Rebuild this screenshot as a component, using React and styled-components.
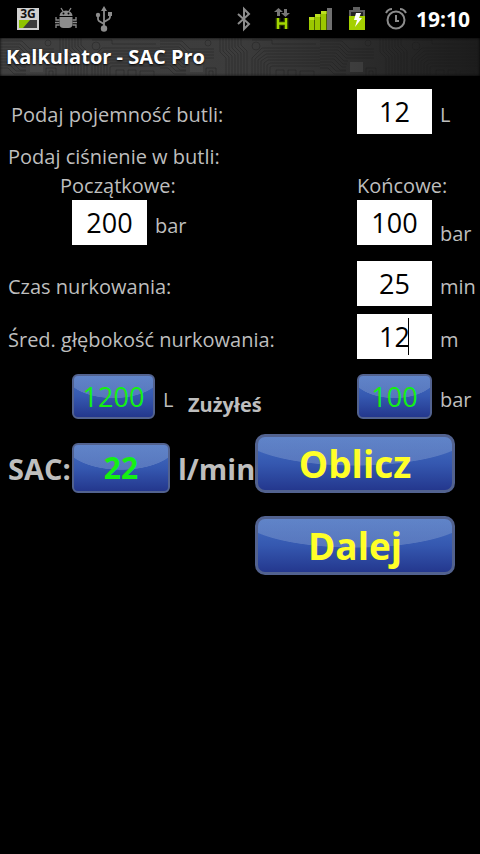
import React, { useState } from 'react'
import styled, { createGlobalStyle, css } from 'styled-components'

const App = () => {
  const [volume, setVolume] = useState('12')
  const [start, setStart] = useState('200')
  const [end, setEnd] = useState('100')
  const [time, setTime] = useState('25')
  const [depth, setDepth] = useState('12')
  const [result, setResult] = useState({ litres: 1200, bar: 100, sac: 22 })

  const calculate = () => {
    const bar = start - end
    const litres = bar * volume
    const sac = Math.round(litres / time / (depth / 10 + 1))
    setResult({ litres, bar, sac })
  }

  return (
    <Page>
      <GlobalStyle />
      <StatusBar>
        <IconGroup>
          <NetworkIcon />
          <DroidIcon />
          <UsbIcon />
        </IconGroup>
        <IconGroup>
          <BluetoothIcon />
          <DataIcon />
          <SignalIcon />
          <BatteryIcon />
          <AlarmIcon />
          <Clock>19:10</Clock>
        </IconGroup>
      </StatusBar>
      <TitleBar>
        <Circuit />
        <Title>Kalkulator - SAC Pro</Title>
      </TitleBar>

      <Form onSubmit={e => e.preventDefault()}>
        <Row>
          <Label htmlFor="volume" $inset>
            Podaj pojemność butli:
          </Label>
          <Field id="volume" value={volume} onChange={e => setVolume(e.target.value)} />
          <Unit>L</Unit>
        </Row>

        <Pressure>
          <Legend>Podaj ciśnienie w butli:</Legend>
          <Row>
            <StartLabel htmlFor="start">Początkowe:</StartLabel>
            <EndLabel htmlFor="end">Końcowe:</EndLabel>
          </Row>
          <Row>
            <LeftCell>
              <Field id="start" value={start} onChange={e => setStart(e.target.value)} />
              <Unit>bar</Unit>
            </LeftCell>
            <Field id="end" value={end} onChange={e => setEnd(e.target.value)} />
            <Unit $low>bar</Unit>
          </Row>
        </Pressure>

        <Row $space={16}>
          <Label htmlFor="time">Czas nurkowania:</Label>
          <Field id="time" value={time} onChange={e => setTime(e.target.value)} />
          <Unit>min</Unit>
        </Row>
        <Row $space={8}>
          <Label htmlFor="depth">Śred. głębokość nurkowania:</Label>
          <Active>
            <Field id="depth" value={depth} onChange={e => setDepth(e.target.value)} />
            <Caret />
          </Active>
          <Unit>m</Unit>
        </Row>

        <Row $space={15}>
          <LeftCell>
            <Result $width={83} aria-label="Zużyte litry">
              {result.litres}
            </Result>
            <Unit $narrow>L</Unit>
            <Used>Zużyłeś</Used>
          </LeftCell>
          <Result $width={75} aria-label="Zużyte bary">
            {result.bar}
          </Result>
          <Unit>bar</Unit>
        </Row>

        <Row $space={15}>
          <Sac>
            <SacText as="label" htmlFor="sac" $width={64}>
              SAC:
            </SacText>
            <Result id="sac" $width={98} $big>
              {result.sac}
            </Result>
            <SacText $gap>l/min</SacText>
          </Sac>
          <Button type="button" onClick={calculate}>
            Oblicz
          </Button>
        </Row>
        <Row $space={23} $end>
          <Button type="button">Dalej</Button>
        </Row>
      </Form>
    </Page>
  )
}

export default App

const NetworkIcon = () => (
  <Icon width="22" height="22" viewBox="0 0 22 22">
    <rect width="22" height="22" fill="#d0d0d0" />
    <rect x="2" y="12" width="18" height="8" fill="#3c3c3c" />
    <path d="M2 12h11l-7 8H2z" fill="#8fc400" />
    <text x="11" y="10" textAnchor="middle" fontFamily="Open Sans, sans-serif" fontWeight="700" fontSize="12" fill="#111">
      3G
    </text>
  </Icon>
)

const DroidIcon = () => (
  <Icon width="22" height="22" viewBox="0 0 22 22" $left={16}>
    <g fill="#8c8c8c">
      <path d="M4.500 8a6.500 5.500 0 0 1 13 0z" />
      <path d="M4.500 9h13v7a4 4 0 0 1-4 4h-5a4 4 0 0 1-4-4z" />
    </g>
    <g stroke="#8c8c8c" strokeWidth="1.300" fill="none">
      <path d="M6 0l2.500 4M16 0l-2.500 4" />
      <path d="M4.500 12H1V9M4.500 14.500H0M4.500 17H1v3M17.500 12H21V9M17.500 14.500H22M17.500 17H21v3" />
    </g>
    <circle cx="8.500" cy="5.500" r="1" fill="#000" />
    <circle cx="13.500" cy="5.500" r="1" fill="#000" />
  </Icon>
)

const UsbIcon = () => (
  <Icon width="18" height="26" viewBox="0 0 18 26" $left={18}>
    <g fill="none" stroke="#8c8c8c" strokeWidth="1.800">
      <path d="M9 3v20M9 18l-5-3q-1-1-1-2V9M9 16l5-3q1-1 1-2V8" />
    </g>
    <g fill="#8c8c8c">
      <path d="M9 0l3 5H6z" />
      <circle cx="9" cy="22.500" r="3.200" />
      <circle cx="3" cy="9" r="2.200" />
      <path d="M13 6h4v4h-4z" />
    </g>
  </Icon>
)

const BluetoothIcon = () => (
  <Icon width="14" height="24" viewBox="0 0 14 24">
    <path d="M1 7l11 10-5 5V2l5 5L1 17" fill="none" stroke="#8c8c8c" strokeWidth="2" />
  </Icon>
)

const DataIcon = () => (
  <Icon width="16" height="24" viewBox="0 0 16 24" $left={23}>
    <g fill="#777">
      <path d="M4.500 1L9 5H6v4H3V5H0zM11.500 10L7 6h3V2h3v4h3z" />
    </g>
    <path d="M4 11v11M12 11v11M4 16.500h8" stroke="#5d8000" strokeOpacity="0.4" strokeWidth="5" />
    <path d="M4 11v11M12 11v11M4 16.500h8" stroke="#a4d800" strokeWidth="2.400" />
  </Icon>
)

const SignalIcon = () => (
  <Icon width="24" height="22" viewBox="0 0 24 22" $left={19}>
    <path d="M0 9h5.500v13H0zM6 6h5.500v16H6zM12 3h5.500v19H12z" fill="#9cc800" />
    <path d="M0 9h5.500v3H0zM6 6h5.500v3H6zM12 3h5.500v3H12z" fill="#bce020" />
    <path d="M18 0h5v22h-5z" fill="#707070" />
  </Icon>
)

const BatteryIcon = () => (
  <Icon width="18" height="24" viewBox="0 0 18 24" $left={15}>
    <path d="M5 0h7v3h5v6H1V3h4z" fill="#606060" />
    <path d="M3 5h12v4H3z" fill="#222" />
    <path d="M1 9h16v14H1z" fill="#a4d000" />
    <path d="M8 6h5l-2 5h3l-7 9 2-7H6z" fill="#fff" />
  </Icon>
)

const AlarmIcon = () => (
  <Icon width="22" height="24" viewBox="0 0 22 24" $left={19}>
    <g fill="none" stroke="#8c8c8c" strokeWidth="2">
      <circle cx="11" cy="13" r="8.500" />
      <path d="M11 8v6h3M1 6q2-4 6-4M21 6q-2-4-6-4" />
    </g>
  </Icon>
)

// printed circuit texture behind the title
const Circuit = () => (
  <CircuitSvg aria-hidden="true">
    <defs>
      <pattern id="circuit" width="160" height="38" patternUnits="userSpaceOnUse">
        <g fill="none" stroke="#161616" strokeOpacity="0.35">
          <path d="M0 3h22l8 8h24M0 6h20l8 8h26M0 9h19l8 8h27M0 12h18l8 8h28M0 15h16l8 8h4M0 18h15l8 8h4M0 21h14l8 8h4M0 24h12l8 8h6M0 27h10l6 6h10M0 30h8l6 6h12" />
          <path d="M60 0v14l6 6v18M63 0v13l6 6v19M66 0v12l6 6v20M69 0v11l6 6v21M72 0v10l6 6v22M75 0v9l6 6v23M78 0v8l6 6v24M81 0v7l6 6v25" />
          <path d="M92 38V20l10-10h58M95 38V21l9-8h56M98 38V22l8-6h54M101 38V23l6-4h53M104 38V25l4-3h52M107 38V27l3-2h50M110 38V29l2-1h48" />
          <path d="M116 38v-6h8v6M128 38v-6h8v6M140 38v-5h14v5M46 38v-8h10v8M49 38v-5h4v5M92 2h20v4h44" />
          <circle cx="96" cy="8" r="4" />
          <circle cx="48" cy="5" r="3" />
        </g>
        <rect x="30" y="24" width="13" height="10" fill="#555" fillOpacity="0.4" />
      </pattern>
    </defs>
    <rect width="100%" height="100%" fill="url(#circuit)" />
  </CircuitSvg>
)

const GlobalStyle = createGlobalStyle`
  body {
    margin: 0;
    background: #000;
  }
  * {
    box-sizing: border-box;
  }
`

const Page = styled.main`
  min-height: 100vh;
  background: #000;
  color: #bebebe;
  font-family: 'Open Sans', 'Noto Sans', sans-serif;
  font-size: 20px;
  line-height: 28px;
`

const StatusBar = styled.header`
  display: flex;
  justify-content: space-between;
  height: 38px;
  padding: 0 10px 0 17px;
`

const IconGroup = styled.div`
  display: flex;
  align-items: center;
`

const Icon = styled.svg`
  flex: none;
  margin-left: ${p => p.$left || 0}px;
  overflow: visible;
`

const Clock = styled.time`
  margin-left: 9px;
  color: #fff;
  font-size: 21px;
  font-weight: 700;
`

const TitleBar = styled.div`
  position: relative;
  height: 38px;
  padding: 4px 6px;
  background: linear-gradient(90deg, #404040, #3c3c3c 50%, #1c1c1c);
  box-shadow: inset 0 0 3px #000;
`

const CircuitSvg = styled.svg`
  position: absolute;
  inset: 0;
  width: 100%;
  height: 100%;
`

const Title = styled.h1`
  position: relative;
  margin: 0;
  color: #fff;
  font-size: 20px;
  line-height: 30px;
  text-shadow: 0 1px 2px #000;
`

const Form = styled.form`
  padding: 13px 0 24px 8px;
`

const Row = styled.div`
  display: flex;
  justify-content: ${p => (p.$end ? 'flex-end' : 'flex-start')};
  align-items: flex-end;
  margin-top: ${p => p.$space || 0}px;
`

const Label = styled.label`
  flex: 1;
  padding: 0 0 5px ${p => (p.$inset ? 3 : 0)}px;
  white-space: nowrap;
`

const Field = styled.input`
  flex: none;
  width: 75px;
  height: 45px;
  padding: 0;
  border: 0;
  border-radius: 0;
  outline: 0;
  background: #fff;
  color: #000;
  font-family: inherit;
  font-size: 27px;
  text-align: center;
`

const Unit = styled.span`
  flex: none;
  width: ${p => (p.$narrow ? 25 : 40)}px;
  margin-left: 8px;
  padding-bottom: ${p => (p.$low ? 0 : 5)}px;
  line-height: ${p => (p.$low ? 22 : 28)}px;
`

const Pressure = styled.fieldset`
  min-width: 0;
  margin: 9px 0 0;
  padding: 0;
  border: 0;
`

const Legend = styled.legend`
  padding: 0 0 1px;
`

const StartLabel = styled.label`
  flex: 1;
  padding-left: 52px;
`

const EndLabel = styled.label`
  width: 123px;
`

const LeftCell = styled.div`
  display: flex;
  flex: 1;
  align-items: flex-end;
  padding-left: 64px;
`

const Active = styled.div`
  position: relative;
  display: flex;
`

const Caret = styled.span`
  position: absolute;
  top: 4px;
  left: 51px;
  width: 1px;
  height: 37px;
  background: #000;
`

const glossy = css`
  border: 3px solid #52628f;
  background: radial-gradient(
      ellipse 58% 54% at 50% 0,
      rgba(140, 165, 210, 0.4) 98%,
      transparent 100%
    ),
    linear-gradient(#4470c4, #3558b0 50%, #22348a);
  background-origin: border-box;
`

const Result = styled.output`
  ${glossy}
  display: flex;
  flex: none;
  align-items: center;
  justify-content: center;
  width: ${p => p.$width}px;
  height: ${p => (p.$big ? 50 : 45)}px;
  border-width: 2px;
  border-radius: 6px;
  color: #14f014;
  font-size: ${p => (p.$big ? 30 : 27)}px;
  font-weight: ${p => (p.$big ? 700 : 400)};
`

const Used = styled.strong`
  white-space: nowrap;
`

const Sac = styled.div`
  display: flex;
  flex: 1;
  align-items: flex-end;
  min-width: 0;
`

const SacText = styled.span`
  flex: none;
  width: ${p => (p.$width ? p.$width + 'px' : 'auto')};
  margin-left: ${p => (p.$gap ? 8 : 0)}px;
  padding-bottom: 4px;
  font-size: 29px;
  line-height: 40px;
  font-weight: 700;
`

const Button = styled.button`
  ${glossy}
  flex: none;
  width: 200px;
  height: 59px;
  margin-right: 25px;
  padding: 0;
  border-radius: 10px;
  color: #ffff28;
  font-family: inherit;
  font-size: 37px;
  line-height: 48px;
  font-weight: 700;
`
